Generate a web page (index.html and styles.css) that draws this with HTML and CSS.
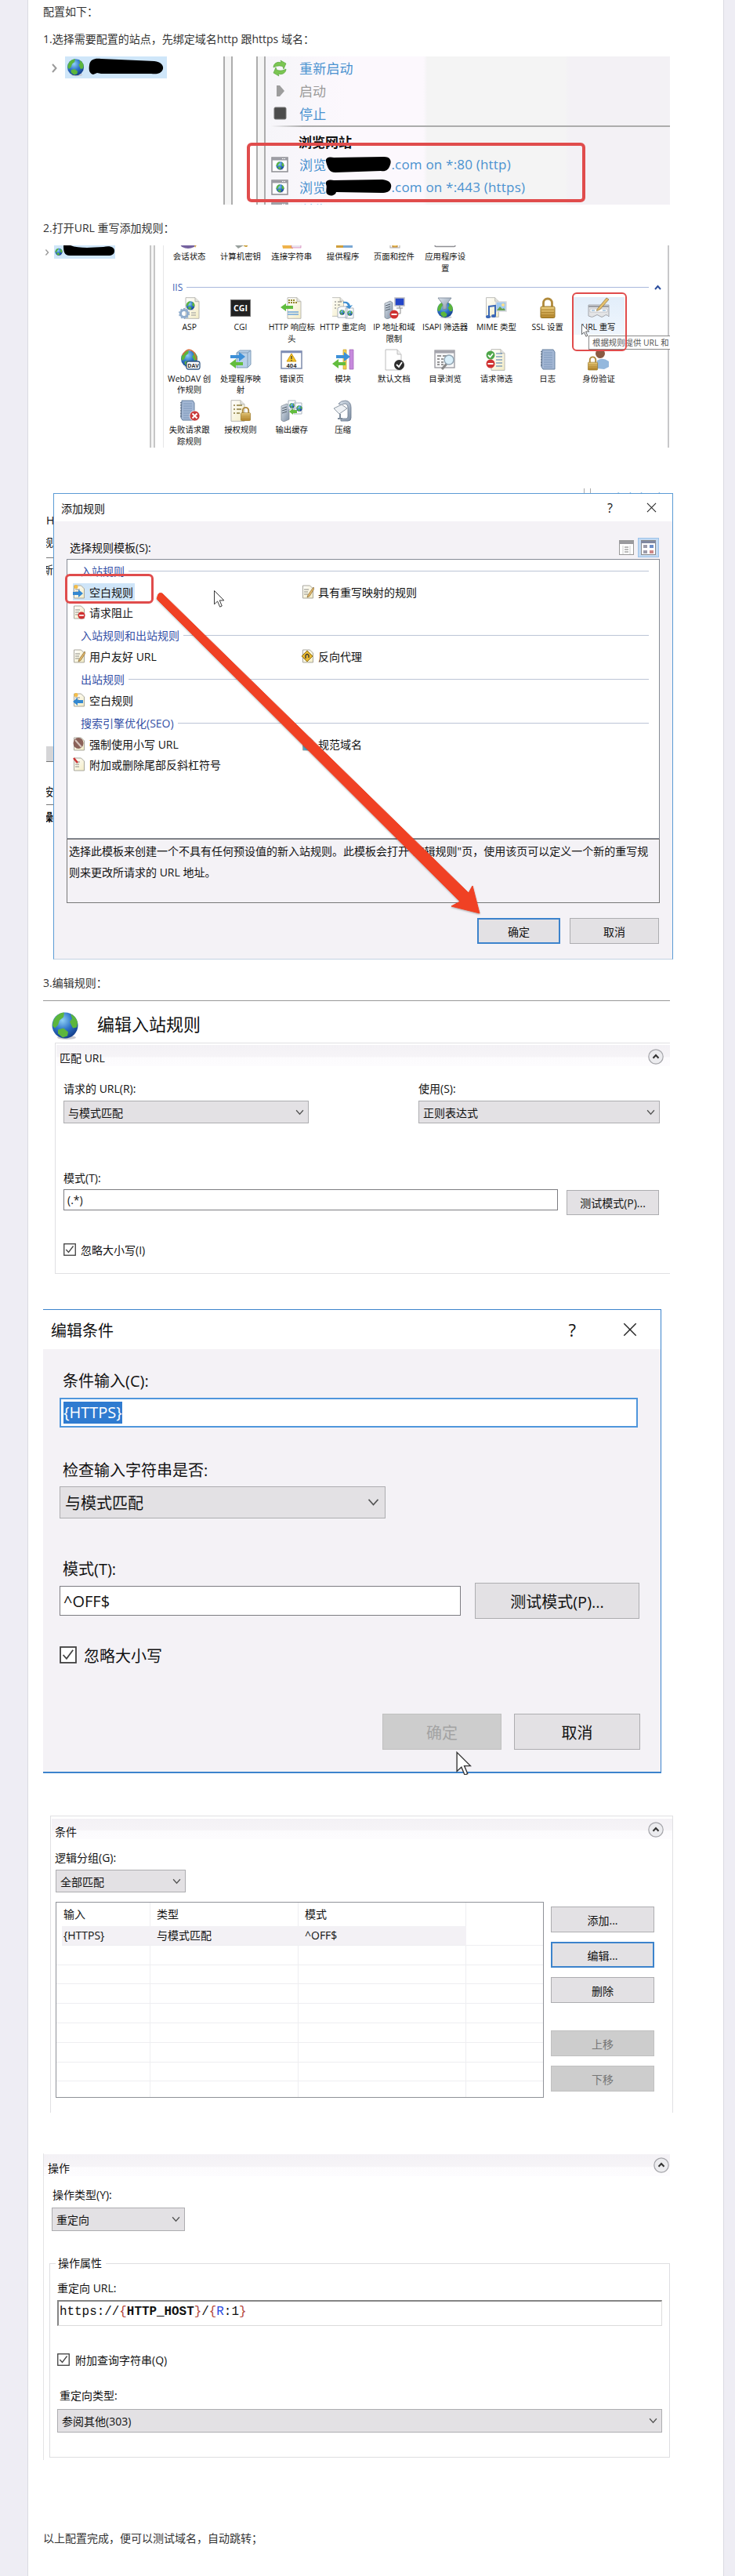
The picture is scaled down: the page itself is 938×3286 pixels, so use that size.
FILE: index.html
```html
<!DOCTYPE html>
<html lang="zh-CN">
    <head>
        <meta charset="UTF-8" />
        <meta name="viewport" content="width=device-width, initial-scale=1.0" />
        <title>IIS http 跳转 https 配置</title>
        <link rel="stylesheet" href="styles.css">
    </head>
    <body>
        <!-- shared icons -->
        <svg class="sprite" width="0" height="0">
            <defs>
                <radialGradient id="sea" cx="40%" cy="30%" r="75%">
                    <stop offset="0" stop-color="#8fd0f5" />
                    <stop offset="0.5" stop-color="#2f74c8" />
                    <stop offset="1" stop-color="#123a86" />
                </radialGradient>
                <linearGradient id="paper" x1="0" y1="0" x2="1" y2="1">
                    <stop offset="0" stop-color="#ffffff" />
                    <stop offset="1" stop-color="#f3ecc4" />
                </linearGradient>
                <linearGradient id="gold" x1="0" y1="0" x2="0" y2="1">
                    <stop offset="0" stop-color="#ecd083" />
                    <stop offset="1" stop-color="#b5852a" />
                </linearGradient>
                <linearGradient id="steel" x1="0" y1="0" x2="1" y2="1">
                    <stop offset="0" stop-color="#dfe6ee" />
                    <stop offset="1" stop-color="#7d8ea3" />
                </linearGradient>
            </defs>
            <symbol id="globe" viewBox="0 0 36 36">
                <ellipse cx="20" cy="33" rx="12" ry="2.5" fill="#c9c9cf" />
                <circle cx="18" cy="17.500" r="16.500" fill="url(#sea)" />
                <path d="M3 12C6 4 13 1 17 1l-1 6-5 4-2 6-4 4-3-3zM25 3c5 2 8 6 9 11l-1 6-5 1-4-8 3-4zM9 23l7-2 6 5-1 5-6 2-6-5z" fill="#5cb63c" />
            </symbol>
            <symbol id="doc" viewBox="0 0 28 28">
                <path d="M6 .7h12l5 5v21.600H6z" fill="url(#paper)" stroke="#b9b9b4" />
                <path d="M18 .7v5h5" fill="#e4e4e0" stroke="#b9b9b4" />
            </symbol>
            <symbol id="lock" viewBox="0 0 28 28">
                <path d="M8.500 14V7.500a5.500 5.500 0 0 1 11 0V14" fill="none" stroke="#b08a3c" stroke-width="2.800" />
                <rect x="5" y="12" width="18" height="14.500" rx="1.500" fill="url(#gold)" stroke="#93701f" />
                <path d="M6 16h16M6 19.500h16M6 23h16" stroke="#a67c28" stroke-width=".8" />
            </symbol>
            <symbol id="server" viewBox="0 0 28 28">
                <path d="M2 8l7-3 3 2v18l-7 3-3-2z" fill="url(#steel)" stroke="#77818c" stroke-width=".7" />
                <path d="M3 11l6-2M3 14l6-2M3 17l6-2" stroke="#56606b" />
            </symbol>
            <symbol id="journal" viewBox="0 0 28 28">
                <path d="M7 1h14l2 3v22H8l-2-3z" fill="#a3b7d4" stroke="#67809f" />
                <path d="M9 5h11M9 8h11M9 11h11M9 14h11M9 17h11M9 20h11M9 23h11" stroke="#7f98ba" />
                <path d="M6 3v20" stroke="#5a6c84" stroke-width="2" stroke-dasharray="1 1" />
            </symbol>
            <symbol id="stop" viewBox="0 0 12 12">
                <circle cx="6" cy="6" r="5.500" fill="#cf3131" />
                <path d="M2.500 6h7" stroke="#fff" stroke-width="2" />
            </symbol>
            <symbol id="webpage" viewBox="0 0 22 20">
                <rect x="1" y="1" width="20" height="18" fill="#fff" stroke="#8d8d92" stroke-width="1.500" />
                <path d="M1 3h20" stroke="#9b9ba3" stroke-width="3" />
                <path d="M14 2.500h5" stroke="#fff" stroke-dasharray="1.500 1" />
                <use href="#globe" x="6" y="6" width="11" height="11" />
            </symbol>
            <symbol id="chevron" viewBox="0 0 10 14">
                <path d="M2 2l4.500 5L2 12" fill="none" stroke="#9a9a9a" stroke-width="2" />
            </symbol>
            <symbol id="caret" viewBox="0 0 10 7">
                <path d="M1 1l4 4.500L9 1" fill="none" stroke="#555" stroke-width="1.200" />
            </symbol>
            <symbol id="tick" viewBox="0 0 16 16">
                <rect x=".75" y=".75" width="14.500" height="14.500" fill="#fff" stroke="#3f3f3f" stroke-width="1.300" />
                <path d="M3.300 8l3.200 3.500 6-8" fill="none" stroke="#444" stroke-width="1.300" />
            </symbol>
            <symbol id="collapse" viewBox="0 0 20 20">
                <circle cx="10" cy="10" r="9.200" fill="#ececef" stroke="#a5a5aa" stroke-width="1.200" />
                <path d="M6.500 11.800L10 8l3.500 3.800" fill="none" stroke="#333" stroke-width="2" />
            </symbol>
            <symbol id="cursor" viewBox="0 0 20 30">
                <path d="M2 1v23l5.500-5 4 9.500 3.500-1.500-4-9.500h7.500z" fill="#fff" stroke="#333" stroke-width="1.300" />
            </symbol>
            <symbol id="close" viewBox="0 0 14 14">
                <path d="M1 1l12 12M13 1L1 13" stroke="#222" stroke-width="1.100" />
            </symbol>
            <symbol id="note" viewBox="0 0 16 18">
                <path d="M1.500 1h9l4 4v12h-13z" fill="url(#paper)" stroke="#a9a79c" />
                <path d="M3 6h6M3 9h5M3 12h5" stroke="#8c8c86" />
            </symbol>
            <symbol id="pencil" viewBox="0 0 16 18">
                <path d="M15 3L8 13l-1 3 3-1.500L16 5z" fill="#e8bc6a" stroke="#7b6033" stroke-width=".7" />
            </symbol>
        </svg>

        <article class="post">
            <p class="first">配置如下&#xff1a;</p>
            <p>1.选择需要配置的站点&#xff0c;先绑定域名http 跟https 域名&#xff1a;</p>

            <figure class="shot site-shot">
                <div class="tree">
                    <svg class="tree-arrow" viewBox="0 0 10 14"><use href="#chevron" /></svg>
                    <div class="tree-node">
                        <svg width="23" height="24"><use href="#globe" /></svg>
                        <svg class="ink" width="96" height="22" viewBox="0 0 96 22">
                            <path d="M1 9C2 1 9 0 16 1l68 3c8 1 12 5 11 10-2 6-8 7-15 6l-64 0-5-1-5 2C1 20 0 15 1 9z" />
                        </svg>
                    </div>
                </div>
                <div class="divider"></div>
                <div class="divider second"></div>
                <ul class="actions">
                    <li class="link">
                        <svg width="22" height="22" viewBox="0 0 22 22">
                            <path d="M3 10c0-5 5-8 10-6l-1-3 7 4-3 7-1-3c-4-2-8-1-12 1z" fill="#7cc653" stroke="#4e9e33" stroke-width=".6" />
                            <path d="M19 12c0 5-5 8-10 6l1 3-7-4 3-7 1 3c4 2 8 1 12-1z" fill="#7cc653" stroke="#4e9e33" stroke-width=".6" />
                        </svg>重新启动
                    </li>
                    <li class="muted">
                        <svg width="22" height="18" viewBox="0 0 22 18"><path d="M7 2h4l6 7-6 7H7z" fill="#9d9d9d" /></svg>启动
                    </li>
                    <li class="link">
                        <svg width="22" height="18" viewBox="0 0 22 18"><rect x="4" y="1" width="15" height="15" rx="1.500" fill="#4c4c4c" stroke="#777" /></svg>停止
                    </li>
                    <li class="rule"></li>
                    <li class="heading">浏览网站</li>
                    <li class="link"><svg width="22" height="20"><use href="#webpage" /></svg>浏览<svg class="ink url-ink" viewBox="0 0 86 22" width="86" height="22"><path d="M2 7C1 1 8 1 12 2l64-1c8 0 10 5 8 10-2 7-6 9-12 8l-58 2C6 21 4 15 2 7z" /></svg>.com on *:80 (http)</li>
                    <li class="link"><svg width="22" height="20"><use href="#webpage" /></svg>浏览<svg class="ink url-ink" viewBox="0 0 86 22" width="86" height="22"><path d="M2 7C1 1 8 1 12 2l62-1c10 1 12 6 11 10-1 6-6 7-12 7l-58-1c-1 5-9 6-12 2-2-4 1-8-1-12z" /></svg>.com on *:443 (https)</li>
                    <li class="link"><svg width="22" height="20"><use href="#webpage" /></svg>浏览 *:8017 (http)</li>
                </ul>
                <div class="mark mark-sites"></div>
            </figure>

            <p>2.打开URL 重写添加规则&#xff1a;</p>

            <figure class="shot iis-shot">
                <div class="tree small">
                    <svg class="tree-arrow" viewBox="0 0 10 14"><use href="#chevron" /></svg>
                    <div class="tree-node">
                        <svg width="14" height="15"><use href="#globe" /></svg>
                        <svg class="ink" width="66" height="14" viewBox="0 0 66 14">
                            <path d="M0 0h9c10 4 26 3 42 2 8-2 15 0 14 6-1 6-8 5-14 5L8 13C1 13 0 8 0 0z" />
                        </svg>
                    </div>
                </div>
                <div class="divider"></div>
                <div class="features">
                    <div class="grid top">
                        <div class="feature"><svg viewBox="0 0 28 28"><ellipse cx="12" cy="22" rx="10" ry="6" fill="#75629f" /><path d="M19 20h6l-4 7z" fill="#d3a23e" /></svg>会话状态</div>
                        <div class="feature"><svg viewBox="0 0 28 28"><path d="M3 20l9-2 6 6-7 4z" fill="#98a09c" /><path d="M21 18v8M18 24h5" stroke="#cda341" stroke-width="2.500" /></svg>计算机密钥</div>
                        <div class="feature"><svg viewBox="0 0 28 28"><path d="M1 18h15v10H3z" fill="#efb34b" /><rect x="14" y="19" width="12" height="8" fill="#e9e4ee" stroke="#c49" stroke-width=".5" /></svg>连接字符串</div>
                        <div class="feature"><svg viewBox="0 0 28 28"><rect x="5" y="18" width="9" height="9" fill="#cf9f3c" /><path d="M14 27v-6q7-5 12 0v6z" fill="#7ba8d4" /></svg>提供程序</div>
                        <div class="feature"><svg viewBox="0 0 28 28"><rect x="9" y="14" width="12" height="13" fill="#fff" stroke="#aaa" /><rect x="12" y="21" width="6" height="5" fill="#f2ca62" stroke="#b57b2b" /></svg>页面和控件</div>
                        <div class="feature"><svg viewBox="0 0 28 28"><rect x="1" y="12" width="26" height="13.500" rx="1.500" fill="#fff" stroke="#8f8f94" stroke-width="1.500" /></svg>应用程序设<br>置</div>
                    </div>
                    <div class="group-title"><span>IIS</span><i></i>
                        <svg width="9" height="7" viewBox="0 0 9 7"><path d="M1 6l3.500-4L8 6" fill="none" stroke="#2d4f9e" stroke-width="2" /></svg>
                    </div>
                    <div class="grid">
                        <div class="feature">
                            <svg viewBox="0 0 28 28"><use href="#doc" x="3" /><use href="#globe" x="9" y="5" width="12" height="12" /><circle cx="7" cy="21" r="4.500" fill="none" stroke="#8faccd" stroke-width="3" /><circle cx="7" cy="21" r="6.300" fill="none" stroke="#8faccd" stroke-width="1.500" stroke-dasharray="2 2" /><path d="M16 20h6M16 23h6" stroke="#999" /></svg>ASP
                        </div>
                        <div class="feature">
                            <svg viewBox="0 0 28 28"><rect x="1.500" y="3.500" width="25" height="21" fill="#222" stroke="#777" /><text x="14" y="17.500" class="icon-text light">CGI</text></svg>CGI
                        </div>
                        <div class="feature">
                            <svg viewBox="0 0 28 28"><use href="#doc" x="3" /><path d="M10 4h9M10 7h11" stroke="#93872f" stroke-width="2" stroke-dasharray="2 1" /><path d="M0 13l7-5v3h9v4H7v3z" fill="#60bd3f" /><path d="M9 19h14M9 22h14" stroke="#6ba4dc" stroke-width="1.500" /></svg>HTTP 响应标<br>头
                        </div>
                        <div class="feature">
                            <svg viewBox="0 0 28 28"><use href="#doc" x="-6" width="25" height="25" /><path d="M3 6h2m2 0h5M3 10h2m2 0h3M3 14h2m2 0h3" stroke="#777" /><path d="M7 14l4-2h8v14H7zM17 14h10v13H17z" fill="#fff" stroke="#a9b3bd" /><use href="#globe" x="9" y="16" width="7" height="7" /><use href="#globe" x="19" y="17" width="7" height="7" /><path d="M14 6c5-1 8 1 9 5l3-1-4 5-5-3 3-1c-1-3-3-4-6-3z" fill="#3f8fd0" /></svg>HTTP 重定向
                        </div>
                        <div class="feature">
                            <svg viewBox="0 0 28 28"><use href="#server" /><rect x="15" y="1" width="12" height="10" fill="#2446c9" stroke="#bcbcc2" stroke-width="1.500" /><path d="M21 11v3m-4 0h8m-3 0v7h-5" stroke="#888" fill="none" /><use href="#stop" x="8" y="16" width="12" height="12" /></svg>IP 地址和域<br>限制
                        </div>
                        <div class="feature">
                            <svg viewBox="0 0 28 28"><use href="#globe" x="3" y="5" width="22" height="23" /><path d="M5 1h17l-6 8v6l-5 1V9z" fill="url(#steel)" stroke="#738293" stroke-width=".8" /></svg>ISAPI 筛选器
                        </div>
                        <div class="feature">
                            <svg viewBox="0 0 28 28"><use href="#doc" x="-4" width="26" height="26" /><rect x="14" y="6" width="13" height="12" fill="#9fcaf0" stroke="#d8d8da" stroke-width="1.500" /><path d="M15 17l4-5 3 3 2-1 2 3z" fill="#6ba04c" /><circle cx="23" cy="10" r="2" fill="#ffe08b" /><path d="M5 24V12l8-1v13" fill="none" stroke="#3b68b7" stroke-width="2" /><ellipse cx="4" cy="25" rx="3" ry="2" fill="#3b68b7" /><ellipse cx="11" cy="24" rx="3" ry="2" fill="#3b68b7" /></svg>MIME 类型
                        </div>
                        <div class="feature"><svg viewBox="0 0 28 28"><use href="#lock" /></svg>SSL 设置</div>
                        <div class="feature hover">
                            <svg viewBox="0 0 28 28"><path d="M1 10h26v15q-3-4-6-1t-6 0-6 0-8 0z" fill="#e3e4e6" stroke="#a3a6ac" /><path d="M1 12h26" stroke="#9b9ea4" stroke-width="2" /><path d="M3 15h22v4H3z" fill="#fff" stroke="#b3b6ba" stroke-width=".7" /><path d="M5 17h4M19 17h4" stroke="#6b9fc9" /><path d="M12 15.500L24 1l3 2-11.500 13-4 1.500z" fill="#e6c06c" stroke="#85703f" stroke-width=".7" /></svg>URL 重写
                        </div>

                        <div class="feature">
                            <svg viewBox="0 0 28 28"><use href="#globe" x="2" y="1" width="23" height="24" /><path d="M5 8Q12-4 20 5l3 9" fill="none" stroke="#d46b3b" stroke-width="1.500" /><rect x="10" y="16" width="17" height="10" rx="2.500" fill="#fff" stroke="#355a84" stroke-width="1.300" /><text x="18.500" y="24" class="icon-text tiny">DAV</text></svg>WebDAV 创<br>作规则
                        </div>
                        <div class="feature">
                            <svg viewBox="0 0 28 28"><path d="M9 5l4-3h14v18l-4 4H9z" fill="#b7d0e8" stroke="#809db9" /><path d="M9 5h14v19M23 5l4-3" fill="none" stroke="#809db9" /><path d="M1 8h11V4l8 6-8 6v-4H1z" fill="#3d90d8" /><path d="M0 19l8-6v4h9v4H8v4z" fill="#63bd3e" /></svg>处理程序映<br>射
                        </div>
                        <div class="feature">
                            <svg viewBox="0 0 28 28"><rect x="1" y="3" width="26" height="22" fill="#fff" stroke="#7d8bab" stroke-width="1.500" /><path d="M1 4h26" stroke="#7e8db5" stroke-width="2.500" /><path d="M14 6l6 10H8z" fill="#f5c525" stroke="#cf9a16" /><path d="M14 9v4m0 1v1.500" stroke="#333" stroke-width="1.200" /><text x="14" y="23.500" class="icon-text">404</text></svg>错误页
                        </div>
                        <div class="feature">
                            <svg viewBox="0 0 28 28"><path d="M14 1h4v25h-4z" fill="#f2cf54" stroke="#c6a02d" stroke-width=".7" /><path d="M22 1h5v25h-5z" fill="#c78add" stroke="#9d5fb5" stroke-width=".7" /><path d="M5 8h10V4l8 6-8 6v-4H5z" fill="#3d90d8" /><path d="M0 19l8-6v4h9v4H8v4z" fill="#63bd3e" /></svg>模块
                        </div>
                        <div class="feature">
                            <svg viewBox="0 0 28 28"><path d="M3 1h15l5 6v20H3z" fill="#fff" stroke="#bdbdbd" /><path d="M18 1v6h5" fill="#eee" stroke="#bdbdbd" /><circle cx="20.500" cy="20.500" r="6.500" fill="#2d2d2d" /><path d="M17 20l3 3 4-6" fill="none" stroke="#fff" stroke-width="1.800" /></svg>默认文档
                        </div>
                        <div class="feature">
                            <svg viewBox="0 0 28 28"><rect x="1" y="2" width="25" height="22" fill="#f7f7f8" stroke="#97979d" stroke-width="1.300" /><path d="M1 4h25" stroke="#a3a3ab" stroke-width="3" /><path d="M4 9h5m2 0h5M4 13h3m2 0h3M4 17h3m2 0h3M4 20h3m2 0h3" stroke="#777" stroke-width="1.500" /><path d="M16 19l-6 7" stroke="#888" stroke-width="3" /><circle cx="19" cy="14" r="6" fill="#d9effa" stroke="#92a5b3" stroke-width="1.500" /></svg>目录浏览
                        </div>
                        <div class="feature">
                            <svg viewBox="0 0 28 28"><use href="#doc" x="2" /><path d="M14 6h8M14 10h8M14 14h8M14 18h8M14 22h8" stroke="#4a78ad" /><circle cx="7" cy="8" r="5.500" fill="#4ea649" /><path d="M4 8l2.500 2.500L10 6" fill="none" stroke="#fff" stroke-width="1.800" /><use href="#stop" x="1" y="13" width="12" height="12" /></svg>请求筛选
                        </div>
                        <div class="feature"><svg viewBox="0 0 28 28"><use href="#journal" /></svg>日志</div>
                        <div class="feature">
                            <svg viewBox="0 0 28 28"><path d="M12 25V15q7-5 15 1v7l-6 3z" fill="#94b8dd" /><circle cx="16" cy="6" r="6" fill="#8a5a42" /><use href="#lock" x="-3" y="9" width="19" height="19" /></svg>身份验证
                        </div>

                        <div class="feature">
                            <svg viewBox="0 0 28 28"><use href="#journal" x="-3" /><circle cx="20.500" cy="20.500" r="6.500" fill="#c93a3a" stroke="#fff" stroke-width=".7" /><path d="M17.500 17.500l6 6m0-6l-6 6" stroke="#fff" stroke-width="2" /></svg>失败请求跟<br>踪规则
                        </div>
                        <div class="feature">
                            <svg viewBox="0 0 28 28"><use href="#doc" x="-4" /><path d="M5 7h2m2 0h7M5 12h2m2 0h6M5 17h2m2 0h4" stroke="#8b7b3e" stroke-width="1.500" /><use href="#lock" x="11" y="8" width="19" height="20" /></svg>授权规则
                        </div>
                        <div class="feature">
                            <svg viewBox="0 0 28 28"><use href="#server" x="-1" /><path d="M10 1h9v11h-9zM17 4h10v14H17z" fill="#fff" stroke="#a8b3bf" /><use href="#globe" x="11" y="4" width="7" height="7" /><use href="#globe" x="20" y="7" width="8" height="8" /><path d="M11 15l5-4v2h5v4h-5v2z" fill="#63bd3e" /></svg>输出缓存
                        </div>
                        <div class="feature">
                            <svg viewBox="0 0 28 28"><path d="M8 5q3-4 9-4 7 1 7 9v13q0 4-4 4h-9v-3h7q2 0 2-3V11q0-6-4-6-3 0-4 2z" fill="url(#steel)" stroke="#67768a" stroke-width=".8" /><path d="M2 11l10-5 7 5-10 7z" fill="#eef1f4" stroke="#8d98a4" /><path d="M10 18v6m-3 0h6" stroke="#7e8c9c" stroke-width="2" /></svg>压缩
                        </div>
                    </div>
                </div>
                <div class="tooltip">根据规则提供 URL 和</div>
                <div class="mark mark-rewrite"></div>
                <svg class="cursor" width="12" height="17"><use href="#cursor" /></svg>
            </figure>

            <figure class="shot add-shot">
                <!-- window left open behind the dialog -->
                <span class="behind b1">H</span>
                <span class="behind b2">规</span>
                <span class="behind b3">新</span>
                <span class="behind b4"></span>
                <span class="behind b5">按</span>
                <span class="behind b6">操</span>
                <span class="behind b7"></span>
                <span class="behind b8">添加规则</span>
                <div class="dialog">
                    <div class="titlebar">
                        <span class="title">添加规则</span>
                        <span class="help">?</span>
                        <svg width="13" height="13"><use href="#close" /></svg>
                    </div>
                    <div class="toolbar">
                        <span>选择规则模板(S):</span>
                        <svg width="19" height="19" viewBox="0 0 19 19"><rect x=".5" y=".5" width="18" height="18" fill="#fff" stroke="#999" /><path d="M0 3h19" stroke="#9a9a9e" stroke-width="4" /><path d="M5 7v11M14 7v11" stroke="#ccc" /><path d="M7 9h5M7 12h5M7 15h5" stroke="#777" /></svg>
                        <div class="view-on">
                            <svg width="19" height="19" viewBox="0 0 19 19"><rect x=".5" y=".5" width="18" height="18" fill="#fff" stroke="#888" /><path d="M0 2.500h19" stroke="#8088a0" stroke-width="3" /><path d="M3 6h5v4H3zM3 13h5v4H3z" fill="#9c9cab" /><path d="M11 6h5v4h-5z" fill="#6d8fc9" /><path d="M11 13h5v4h-5z" fill="#c88" /></svg>
                        </div>
                    </div>
                    <div class="templates">
                        <div class="t-head"><span>入站规则</span><i></i></div>
                        <div class="t-row">
                            <div class="t-item selected"><svg viewBox="0 0 16 18"><use href="#note" /><path d="M0 9h7V6l6 5-6 5v-3H0z" fill="#3488d0" /><circle cx="4" cy="2.500" r="2.500" fill="#f3bd4a" /></svg>空白规则</div>
                            <div class="t-item"><svg viewBox="0 0 16 18"><use href="#note" /><use href="#pencil" /></svg>具有重写映射的规则</div>
                        </div>
                        <div class="t-row">
                            <div class="t-item"><svg viewBox="0 0 16 18"><use href="#note" /><use href="#stop" x="6" y="8" width="10" height="10" /></svg>请求阻止</div>
                        </div>
                        <div class="t-head"><span>入站规则和出站规则</span><i></i></div>
                        <div class="t-row">
                            <div class="t-item"><svg viewBox="0 0 16 18"><use href="#note" /><use href="#pencil" /></svg>用户友好 URL</div>
                            <div class="t-item"><svg viewBox="0 0 16 18"><use href="#note" /><path d="M7 2l7 7-7 7-7-7z" fill="#e8b830" stroke="#8e7119" /><path d="M5 12V8q2-3 4 0v3" fill="none" stroke="#333" stroke-width="1.300" /></svg>反向代理</div>
                        </div>
                        <div class="t-head"><span>出站规则</span><i></i></div>
                        <div class="t-row">
                            <div class="t-item"><svg viewBox="0 0 16 18"><use href="#note" /><path d="M13 9H6V6l-6 5 6 5v-3h7z" fill="#3488d0" /><circle cx="4" cy="2.500" r="2.500" fill="#f3bd4a" /></svg>空白规则</div>
                        </div>
                        <div class="t-head"><span>搜索引擎优化(SEO)</span><i></i></div>
                        <div class="t-row">
                            <div class="t-item"><svg viewBox="0 0 16 18"><use href="#note" /><ellipse cx="7" cy="8" rx="6.500" ry="7" fill="#8b6259" /><path d="M3 4l8 9" stroke="#d8c7bf" stroke-width="2" /></svg>强制使用小写 URL</div>
                            <div class="t-item"><svg viewBox="0 0 16 18"><use href="#note" /><rect x="2" y="5" width="12" height="12" fill="#58aacb" /></svg>规范域名</div>
                        </div>
                        <div class="t-row">
                            <div class="t-item"><svg viewBox="0 0 16 18"><use href="#note" /><path d="M1 1l5 6" stroke="#c33" stroke-width="2.500" /></svg>附加或删除尾部反斜杠符号</div>
                        </div>
                    </div>
                    <div class="description">选择此模板来创建一个不具有任何预设值的新入站规则。此模板会打开"编辑规则"页&#xff0c;使用该页可以定义一个新的重写规<br>则来更改所请求的 URL 地址。</div>
                    <div class="buttons">
                        <div class="btn focus">确定</div>
                        <div class="btn cancel">取消</div>
                    </div>
                </div>
                <div class="mark mark-blank"></div>
                <svg class="cursor" width="15" height="24"><use href="#cursor" /></svg>
                <svg class="arrow" width="420" height="420" viewBox="0 0 420 420">
                    <path d="M3 6Q4 0 9 2L400 384l5-9 9 35-36-9 11-6L4 11Q1 9 3 6z" />
                </svg>
            </figure>

            <p>3.编辑规则&#xff1a;</p>

            <figure class="shot match-shot">
                <div class="page-title">
                    <svg width="36" height="37"><use href="#globe" /></svg>
                    <span>编辑入站规则</span>
                </div>
                <div class="panel">
                    <div class="panel-head"><span>匹配 URL</span><svg><use href="#collapse" /></svg></div>
                    <div class="cols">
                        <div>
                            <div class="label">请求的 URL(R):</div>
                            <div class="select">与模式匹配<svg><use href="#caret" /></svg></div>
                        </div>
                        <div>
                            <div class="label">使用(S):</div>
                            <div class="select">正则表达式<svg><use href="#caret" /></svg></div>
                        </div>
                    </div>
                    <div class="label pattern">模式(T):</div>
                    <div class="field-row">
                        <div class="input">(.*)</div>
                        <div class="btn">测试模式(P)...</div>
                    </div>
                    <div class="check"><svg><use href="#tick" /></svg>忽略大小写(I)</div>
                </div>
            </figure>

            <figure class="shot cond-shot">
                <div class="cond-dialog">
                    <div class="titlebar">
                        <span class="title">编辑条件</span>
                        <span class="help">?</span>
                        <svg width="18" height="18"><use href="#close" /></svg>
                    </div>
                    <div class="label l1">条件输入(C):</div>
                    <div class="input active"><span>{HTTPS}</span></div>
                    <div class="label l2">检查输入字符串是否:</div>
                    <div class="select">与模式匹配<svg><use href="#caret" /></svg></div>
                    <div class="label l3">模式(T):</div>
                    <div class="field-row">
                        <div class="input">^OFF$</div>
                        <div class="btn">测试模式(P)...</div>
                    </div>
                    <div class="check"><svg><use href="#tick" /></svg>忽略大小写</div>
                    <div class="buttons">
                        <div class="btn disabled">确定</div>
                        <div class="btn cancel">取消</div>
                    </div>
                </div>
                <svg class="cursor" width="21" height="34"><use href="#cursor" /></svg>
            </figure>

            <figure class="shot list-shot">
                <div class="panel-head"><span>条件</span><svg><use href="#collapse" /></svg></div>
                <div class="label">逻辑分组(G):</div>
                <div class="select">全部匹配<svg><use href="#caret" /></svg></div>
                <div class="list-row">
                    <div class="table">
                        <div class="tr th"><span>输入</span><span>类型</span><span>模式</span><span></span></div>
                        <div class="tr on"><span>{HTTPS}</span><span>与模式匹配</span><span>^OFF$</span><span></span></div>
                        <div class="tr"><span></span><span></span><span></span><span></span></div>
                        <div class="tr"><span></span><span></span><span></span><span></span></div>
                        <div class="tr"><span></span><span></span><span></span><span></span></div>
                        <div class="tr"><span></span><span></span><span></span><span></span></div>
                        <div class="tr"><span></span><span></span><span></span><span></span></div>
                        <div class="tr"><span></span><span></span><span></span><span></span></div>
                        <div class="tr"><span></span><span></span><span></span><span></span></div>
                        <div class="tr"><span></span><span></span><span></span><span></span></div>
                    </div>
                    <div class="side">
                        <div class="btn">添加...</div>
                        <div class="btn focus">编辑...</div>
                        <div class="btn">删除</div>
                        <div class="btn disabled up">上移</div>
                        <div class="btn disabled">下移</div>
                    </div>
                </div>
            </figure>

            <figure class="shot action-shot">
                <div class="panel-head"><span>操作</span><svg><use href="#collapse" /></svg></div>
                <div class="label type">操作类型(Y):</div>
                <div class="select">重定向<svg><use href="#caret" /></svg></div>
                <div class="props">
                    <div class="legend">操作属性</div>
                    <div class="label">重定向 URL:</div>
                    <div class="input code">https://<em>{</em><b>HTTP_HOST</b><em>}</em>/<em>{</em><i>R</i>:1<em>}</em></div>
                    <div class="check"><svg><use href="#tick" /></svg>附加查询字符串(Q)</div>
                    <div class="label redirect">重定向类型:</div>
                    <div class="select">参阅其他(303)<svg><use href="#caret" /></svg></div>
                </div>
            </figure>

            <p class="last">以上配置完成&#xff0c;便可以测试域名&#xff0c;自动跳转&#xff1b;</p>
        </article>
    </body>
</html>
```

FILE: styles.css
```css
:root {
    --face: #e3e1e4;
    --dialog: #f4f2f6;
    --line: #adadb0;
    --blue: #3c83cc;
    --red: #e04c4c;
}

* {
    box-sizing: border-box;
}

body {
    margin: 0;
    background-color: #eeedf4;
    font-family: "Open Sans", "Noto Sans CJK SC", sans-serif;
    font-size: 14px;
    color: #111;
}

.sprite {
    position: absolute;
}

.post {
    display: flex;
    flex-direction: column;
    width: 889px;
    height: 3286px;
    margin-left: 35px;
    padding-left: 19px;
    background-color: #fff;
    border-left: 1px solid #dadae2;
    border-right: 1px solid #dadae2;
}

p {
    margin: 20px 0 0;
    height: 20px;
    line-height: 20px;
    color: #333;
    flex: none;
}

p.first {
    margin-top: 5px;
}

p.first + p {
    margin-top: 15px;
}

p.last {
    margin-top: 90px;
}

.shot {
    position: relative;
    flex: none;
    overflow: hidden;
    width: 800px;
    margin: 12px 0 0;
    white-space: nowrap;
}

.mark {
    position: absolute;
    border: 3px solid var(--red);
    border-radius: 6px;
}

.cursor {
    position: absolute;
}

.ink path {
    fill: #000;
}

/* common form controls */
.label {
    height: 20px;
    line-height: 20px;
}

.select {
    display: flex;
    align-items: center;
    justify-content: space-between;
    height: 29px;
    padding: 0 5px;
    background-color: var(--face);
    border: 1px solid var(--line);
}

.select svg {
    width: 11px;
    height: 8px;
}

.input {
    display: flex;
    align-items: center;
    background-color: #fff;
    border: 1px solid #7d7d82;
    padding: 0 4px;
}

.btn {
    display: flex;
    align-items: center;
    justify-content: center;
    height: 33px;
    background-color: var(--face);
    border: 1px solid var(--line);
}

.btn.focus {
    border: 2px solid var(--blue);
}

.btn.disabled {
    background-color: #cdcdcd;
    border-color: #c0c0c0;
    color: #777;
}

.check {
    display: flex;
    align-items: center;
    height: 20px;
}

.check svg {
    width: 16px;
    height: 16px;
    margin-right: 6px;
}

.panel-head {
    display: flex;
    justify-content: space-between;
    height: 27px;
    line-height: 33px;
    background: linear-gradient(#f3f1f5, #f6f4f7 55%, #fcfbfd 60%, #fdfcfe);
}

.panel-head svg {
    width: 20px;
    height: 20px;
    margin: 5px 8px 0 0;
}

.titlebar {
    display: flex;
    align-items: center;
    background-color: #fff;
}

.titlebar .title {
    flex: 1;
}

.buttons {
    display: flex;
    justify-content: flex-end;
}

/* step 1: bindings */
.site-shot {
    display: flex;
    height: 189px;
}

.tree {
    display: flex;
    width: 230px;
    padding-left: 10px;
}

.tree-arrow {
    width: 10px;
    height: 14px;
    margin: 8px 8px 0 0;
}

.tree-node {
    display: flex;
    align-items: flex-start;
    width: 130px;
    height: 28px;
    padding: 2px 0 0 2px;
    background-color: #cfe6f9;
}

.tree-node .ink {
    flex: none;
    margin-left: 5px;
}

.divider {
    width: 12px;
    background-color: #f5f5f5;
    border-left: 2px solid #adadad;
    border-right: 2px solid #adadad;
}

.divider.second {
    margin-left: 30px;
}

.actions {
    flex: 1;
    list-style: none;
    margin: 0;
    padding: 0 0 0 7px;
    font-size: 17px;
    background: linear-gradient(90deg, #f6f5f9, #fcf8fd 20%, #fcf8fd 39%, #f4f4f4 40%, #f4f4f4 74%, #f3f1f5 75%);
}

.actions li {
    display: flex;
    align-items: center;
    height: 29px;
}

.actions li > svg:first-child {
    margin-right: 14px;
}

.actions .link {
    color: #4a92d0;
    letter-spacing: 0.2px;
}

.actions .muted {
    color: #9a9a9a;
}

.actions .rule {
    height: 2px;
    margin: 1px 0 4px;
    background: linear-gradient(90deg, #f6f5f9, #acacac 8%);
}

.actions .heading {
    padding-left: 35px;
    font-weight: bold;
}

.url-ink {
    margin-left: -2px;
    margin-right: -1px;
}

.mark-sites {
    left: 260px;
    top: 110px;
    width: 432px;
    height: 76px;
    border-width: 4px;
}

/* step 2: IIS features */
.iis-shot {
    display: flex;
    height: 258px;
    font-size: 10.4px;
}

.tree.small {
    width: 136px;
    padding-left: 2px;
}

.small .tree-arrow {
    width: 7px;
    height: 10px;
    margin: 4px 5px 0 0;
}

.small .tree-node {
    width: 78px;
    height: 17px;
    padding: 1px 0 0 1px;
}

.small .ink {
    margin: -1px 0 0 1px;
}

.iis-shot .divider {
    width: 7px;
    margin-right: 10px;
    border-color: #c6c6c6;
}

.features {
    width: 646px;
    border-left: 1px solid #e6e6e8;
    border-right: 2px solid #c8c8ca;
}

.grid {
    display: grid;
    grid-template-columns: repeat(9, 65.3px);
    grid-auto-rows: 65.5px;
}

.grid.top {
    margin-top: -24px;
}

.feature {
    text-align: center;
    line-height: 14.7px;
}

.feature svg {
    display: block;
    width: 28px;
    height: 28px;
    margin: 0 auto 3px;
}

.feature.hover {
    height: 48px;
    background: linear-gradient(#e2eefa, #f0f6fd);
}

.icon-text {
    font: bold 7.500px "Open Sans", sans-serif;
    text-anchor: middle;
    fill: #333;
}

.icon-text.light {
    font-size: 10.5px;
    fill: #fff;
}

.icon-text.tiny {
    font-size: 7px;
}

.group-title {
    display: flex;
    align-items: center;
    height: 20px;
    margin: 1.5px 0 3px;
    padding: 0 8px 0 11px;
    color: #3f5fb5;
    font-size: 12px;
}

.group-title i {
    flex: 1;
    height: 1px;
    margin: 0 7px 0 5px;
    background-color: #a9b8dc;
}

.tooltip {
    position: absolute;
    left: 696px;
    top: 115px;
    width: 120px;
    height: 18px;
    padding-left: 4px;
    line-height: 16px;
    background-color: #fff;
    border: 1px solid #8a8a8a;
    color: #555;
}

.mark-rewrite {
    left: 675px;
    top: 60px;
    width: 70px;
    height: 75px;
    border-width: 2px;
}

.iis-shot .cursor {
    left: 686px;
    top: 100px;
}

/* add rule dialog */
.add-shot {
    width: 804px;
    height: 601px;
    margin-top: 52px;
    padding: 6px 0 0 13px;
}

.behind {
    position: absolute;
    left: 4px;
    width: 9px;
    overflow: hidden;
}

.b1 {
    top: 31px;
}

.b2 {
    top: 58px;
    direction: rtl;
}

.b3 {
    top: 88px;
    height: 34px;
    border-top: 1px solid #777;
    padding-top: 4px;
    direction: rtl;
}

.b4 {
    top: 329px;
    height: 20px;
    background-color: #d5d5d7;
    border-bottom: 1px solid #777;
}

.b5 {
    top: 376px;
    direction: rtl;
}

.b6 {
    top: 403px;
    border-top: 1px solid #777;
    padding-top: 4px;
    direction: rtl;
    font-weight: bold;
}

.b7 {
    left: 690px;
    top: 0;
    height: 7px;
    border-left: 1px solid #aaa;
    border-right: 1px solid #aaa;
}

.b8 {
    left: 732px;
    top: 1px;
    width: 60px;
    color: #4a92d0;
}

.dialog {
    position: relative;
    width: 791px;
    height: 595px;
    background-color: var(--dialog);
    border: 1px solid #5b9bd5;
    border-bottom-color: #c3d3e2;
}

.dialog .titlebar {
    height: 35px;
    padding: 0 20px 0 9px;
}

.titlebar .help {
    font-size: 16px;
    margin-right: 43px;
}

.toolbar {
    display: flex;
    align-items: center;
    height: 48px;
    padding: 18px 17px 0 20px;
}

.toolbar span {
    flex: 1;
}

.view-on {
    display: flex;
    align-items: center;
    justify-content: center;
    width: 27px;
    height: 25px;
    margin-left: 5px;
    background-color: #c3daf3;
    border: 1px solid #9cc3ea;
}

.templates {
    width: 757px;
    height: 357px;
    margin-left: 16px;
    background-color: #fff;
    border: 1px solid #868b95;
}

.t-head {
    display: flex;
    align-items: center;
    height: 22px;
    margin: 5px 13px 3px 17px;
    color: #3450a6;
}

.t-head:first-child {
    margin-top: 3px;
}

.t-head i {
    flex: 1;
    height: 1px;
    margin-left: 5px;
    background-color: #bcc5d6;
}

.t-row {
    display: grid;
    grid-template-columns: 292px 1fr;
    height: 26px;
    padding-left: 7px;
    align-items: center;
}

.t-item {
    display: flex;
    align-items: center;
    justify-self: start;
    height: 22px;
}

.t-item svg {
    width: 16px;
    height: 18px;
    margin-right: 5px;
}

.t-item.selected {
    padding-right: 2px;
    background-color: #cfe5f8;
}

.description {
    width: 757px;
    height: 82px;
    margin: 0 0 19px 16px;
    padding: 1px 2px;
    line-height: 27px;
    border: 1px solid #777;
}

.dialog .buttons {
    padding-right: 17px;
    gap: 12px;
}

.dialog .btn {
    width: 106px;
}

.dialog .btn.cancel {
    width: 114px;
}

.mark-blank {
    left: 28px;
    top: 109px;
    width: 113px;
    height: 38px;
}

.add-shot .cursor {
    left: 217px;
    top: 129px;
}

.arrow {
    position: absolute;
    left: 143px;
    top: 132px;
    filter: drop-shadow(0 1px 1px rgba(0, 0, 0, 0.3));
}

.arrow path {
    fill: #f04124;
    stroke: #f04124;
    stroke-width: 1;
}

/* step 3: match URL */
.match-shot {
    height: 349px;
    border-top: 1px solid #999;
}

.page-title {
    display: flex;
    align-items: center;
    height: 53px;
    padding: 10px 0 0 10px;
    font-size: 22px;
}

.page-title span {
    margin: -8px 0 0 23px;
}

.panel {
    height: 295px;
    margin-left: 15px;
    padding: 2px 0 0 10px;
    border: 1px solid #e0e0e3;
    border-right: 0;
}

.panel .panel-head {
    margin-left: -9px;
    padding-left: 4px;
}

.cols {
    display: grid;
    grid-template-columns: 313px 308px;
    gap: 140px;
    padding-top: 19px;
}

.cols .select {
    margin-top: 5px;
}

.pattern {
    margin-top: 60px;
}

.field-row {
    display: flex;
}

.panel .field-row {
    padding-top: 4px;
}

.panel .input {
    width: 631px;
    height: 27px;
}

.panel .btn {
    width: 118px;
    height: 32px;
    margin: 1px 0 0 11px;
}

.panel .check {
    margin-top: 34px;
}

/* edit condition dialog */
.cond-shot {
    width: 789px;
    height: 595px;
    margin-top: 44px;
    padding-top: 1px;
    font-size: 20px;
}

.cond-dialog {
    height: 592px;
    padding-left: 21px;
    background-color: var(--dialog);
    border: 1px solid var(--blue);
    border-width: 1px 1px 2px 0;
}

.cond-dialog .titlebar {
    height: 50px;
    margin-left: -21px;
    padding: 0 30px 0 10px;
}

.cond-dialog .help {
    font-size: 22px;
    margin-right: 60px;
}

.cond-dialog .label {
    height: 24px;
    line-height: 24px;
    padding-left: 4px;
}

.cond-dialog .l1 {
    margin: 29px 0 9px;
}

.cond-dialog .l2 {
    margin: 43px 0 8px;
}

.cond-dialog .l3 {
    margin: 53px 0 5px;
}

.cond-dialog .input {
    width: 512px;
    height: 38px;
    margin-top: 4px;
}

.cond-dialog .input.active {
    width: 738px;
    margin-top: 0;
    border: 2px solid #4f96dc;
    padding-left: 3px;
}

.active span {
    height: 28px;
    line-height: 27px;
    color: #fff;
    background-color: #2f7bd0;
}

.cond-dialog .select {
    width: 416px;
    height: 41px;
    padding: 0 7px 0 6px;
}

.cond-dialog .select svg {
    width: 15px;
    height: 11px;
}

.cond-dialog .btn {
    height: 46px;
}

.cond-dialog .field-row .btn {
    width: 210px;
    margin-left: 18px;
}

.cond-dialog .check {
    height: 22px;
    margin: 35px 0 64px;
}

.cond-dialog .check svg {
    width: 22px;
    height: 22px;
    margin-right: 9px;
}

.cond-dialog .buttons {
    gap: 16px;
    padding-right: 26px;
}

.cond-dialog .buttons .btn {
    width: 152px;
}

.cond-dialog .buttons .cancel {
    width: 161px;
}

.cond-dialog .disabled {
    color: #a3a3a3;
}

.cond-shot .cursor {
    left: 526px;
    top: 564px;
}

/* condition list */
.list-shot {
    width: 795px;
    height: 379px;
    margin: 52px 0 0 9px;
    padding: 3px 0 0 6px;
    border: 1px solid #e0e0e3;
    border-bottom: 0;
}

.list-shot .panel-head {
    height: 26px;
    margin-left: -5px;
    padding-left: 4px;
}

.list-shot .panel-head svg {
    margin: 4px 11px 0 0;
}

.list-shot .label {
    margin: 14px 0 5px;
    text-indent: -1px;
}

.list-shot > .select {
    width: 166px;
}

.list-row {
    display: flex;
    gap: 9px;
    margin-top: 12px;
}

.table {
    width: 623px;
    height: 250px;
    border: 1px solid #8f9298;
    overflow: hidden;
}

.tr {
    display: grid;
    grid-template-columns: 120px 189px 214px 1fr;
    height: 24.8px;
    line-height: 24px;
}

.tr span {
    padding-left: 8px;
    border-right: 1px solid #eeeef1;
    border-bottom: 1px solid #eeeef1;
}

.tr span:first-child {
    padding-left: 9px;
}

.tr span:last-child {
    border-right: 0;
}

.tr.th {
    height: 30px;
    line-height: 30px;
}

.tr.th span {
    border-bottom: 0;
}

.tr.on span:not(:last-child) {
    background-color: #f3f1f5;
    border-right-color: #f3f1f5;
}

.tr.on span:first-child {
    margin-left: 7px;
    padding-left: 2px;
}

.side {
    display: flex;
    flex-direction: column;
    gap: 12px;
    width: 132px;
    padding-top: 6px;
}

.side .up {
    margin-top: 23px;
}

/* redirect action */
.action-shot {
    height: 391px;
    margin-top: 52px;
    padding-top: 1px;
    border-left: 1px solid #e4e4e6;
}

.action-shot .panel-head {
    height: 28px;
    line-height: 36px;
    padding-left: 5px;
}

.action-shot .panel-head svg {
    margin: 4px 1px 0 0;
}

.label.type {
    margin: 14px 0 6px 11px;
}

.action-shot .select {
    height: 30px;
}

.action-shot > .select {
    width: 170px;
    margin-left: 10px;
}

.props {
    width: 792px;
    height: 248px;
    margin: 41px 0 0 7px;
    padding: 0 9px;
    border: 1px solid #dedee1;
}

.legend {
    width: 64px;
    height: 20px;
    line-height: 20px;
    margin: -11px 0 12px -2px;
    padding-left: 3px;
    background-color: #fff;
}

.code {
    height: 33px;
    width: 772px;
    margin: 5px 0 33px;
    padding: 0 1px 4px;
    border-width: 2px 1px 1px 2px;
    border-color: #858585 #dcdcdc #dcdcdc #858585;
    font-family: "Liberation Mono", monospace;
    font-size: 15.9px;
}

.code em {
    font-style: normal;
    color: #b4473c;
}

.code i {
    font-style: normal;
    color: #2b4be0;
}

.props .check svg {
    margin-right: 7px;
}

.label.redirect {
    margin: 26px 0 7px 3px;
}
```
